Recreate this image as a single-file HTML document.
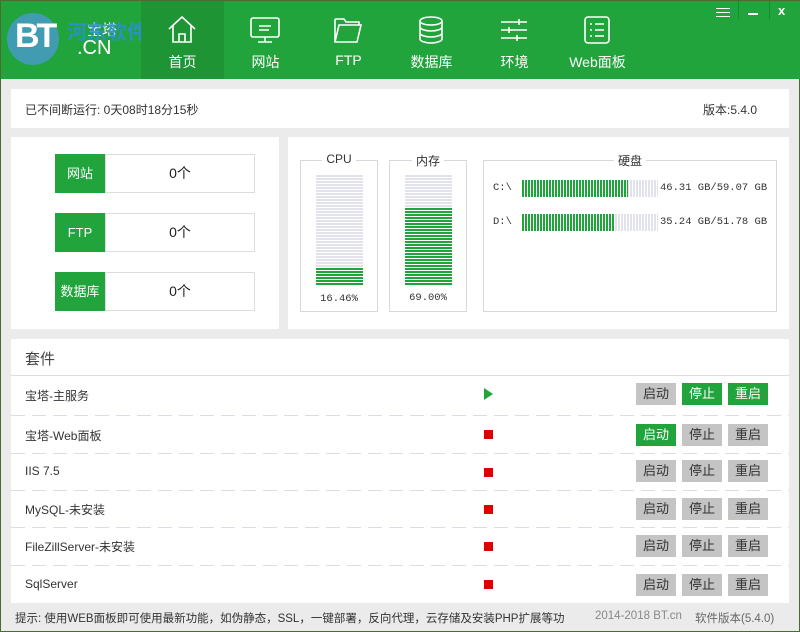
<!DOCTYPE html>
<html><head><meta charset="utf-8"><style>
*{margin:0;padding:0;box-sizing:border-box}
body{width:800px;height:632px;position:relative;background:#ebebeb;font-family:"Liberation Sans","Noto Sans CJK SC",sans-serif;font-size:12px;color:#333;overflow:hidden;border:1px solid #4b6b32}
.abs{position:absolute}
.hdr{left:0;top:0;width:800px;height:78px;background:#22a43d}
.nav{top:0;height:78px;width:83px;color:#fff;text-align:center}
.nav .lb{position:absolute;top:51px;left:0;width:100%;font-size:14px}
.nav svg{position:absolute;top:14px;left:26px}
.panel{background:#fff}
.lbl{background:#22a43d;color:#fff;width:50px;height:39px;line-height:39px;text-align:center;font-size:13px}
.val{border:1px solid #ddd;width:150px;height:39px;line-height:37px;text-align:center;font-size:14px;color:#222}
.vb{width:47px;height:111px;background:repeating-linear-gradient(#e2e2ec 0 2px,#fff 2px 3px)}
.gb{position:absolute;left:0;bottom:0;width:100%;background:repeating-linear-gradient(#22a43d 0 2px,#fff 2px 3px)}
.hb{height:17px;width:136px;background:repeating-linear-gradient(90deg,#e2e2ec 0 2px,#fff 2px 3px)}
.hg{position:absolute;left:0;top:0;height:100%;background:repeating-linear-gradient(90deg,#22a43d 0 2px,#fff 2px 3px)}
.box{border:1px solid #d8d8d8}
.cap{position:absolute;top:-9px;left:0;width:100%;text-align:center;font-size:12px}
.cap span{background:#fff;padding:0 4px}
.mono{font-family:"Liberation Mono","Noto Sans CJK SC",monospace;font-size:10.5px}
.row{left:10px;width:778px;height:1px;background:repeating-linear-gradient(90deg,#dcdce6 0 14px,transparent 14px 21px)}
.rn{left:24px;font-size:12px;color:#333}
.btn{width:40px;height:22px;line-height:22px;text-align:center;font-size:13px;background:#c4c4c4;color:#333}
.btn.g{background:#22a43d;color:#fff}
.ind{width:9px;height:9px;background:#e00000}
</style></head><body>
<div class="abs hdr"></div>
<div class="abs" style="left:6px;top:12px;width:52px;height:52px;border-radius:50%;background:#4a9ad0;opacity:.8"></div>
<div class="abs" style="left:14px;top:16px;color:#fff;font-size:34px;font-weight:bold;letter-spacing:-3px">BT</div>
<div class="abs" style="left:86px;top:18px;color:#fff;font-size:15px">宝塔</div>
<div class="abs" style="left:76px;top:36px;color:#fff;font-size:20px">.CN</div>
<div class="abs" style="left:66px;top:15px;color:#2b8fd6;font-size:20px;font-weight:bold;opacity:.85">河东软件园</div>
<div class="abs nav" style="left:140px;background:#1f9434"><svg width="30" height="30" viewBox="0 0 30 30" fill="none" stroke="#fff" stroke-width="1.6"><path d="M2 14 L15 2 L28 14 M6 11 V27 H24 V11 M12 27 V19 H18 V27"/></svg><div class="lb">首页</div></div>
<div class="abs nav" style="left:223px"><svg width="30" height="30" viewBox="0 0 30 30" fill="none" stroke="#fff" stroke-width="1.6"><rect x="1" y="3" width="28" height="19" rx="2"/><path d="M9 11H21M9 15H19M15 22V27M8 27H22"/></svg><div class="lb">网站</div></div>
<div class="abs nav" style="left:306px"><svg width="30" height="30" viewBox="0 0 30 30" fill="none" stroke="#fff" stroke-width="1.6"><path d="M2 4H11L13 7H26V10M2 4V27H24L28 10H6L2 27"/></svg><div class="lb">FTP</div></div>
<div class="abs nav" style="left:389px"><svg width="30" height="30" viewBox="0 0 30 30" fill="none" stroke="#fff" stroke-width="1.6"><ellipse cx="15" cy="6" rx="11" ry="4"/><path d="M4 6V24C4 26 9 28 15 28S26 26 26 24V6M4 12C4 14 9 16 15 16S26 14 26 12M4 18C4 20 9 22 15 22S26 20 26 18"/></svg><div class="lb">数据库</div></div>
<div class="abs nav" style="left:472px"><svg width="30" height="30" viewBox="0 0 30 30" fill="none" stroke="#fff" stroke-width="1.6"><path d="M2 7H28M2 15H28M2 23H28M20 4V10M10 12V18M18 20V26"/></svg><div class="lb">环境</div></div>
<div class="abs nav" style="left:555px"><svg width="30" height="30" viewBox="0 0 30 30" fill="none" stroke="#fff" stroke-width="1.6"><rect x="3" y="2" width="24" height="26" rx="3"/><path d="M8 9H10M13 9H22M8 15H10M13 15H22M8 21H10M13 21H22"/></svg><div class="lb">Web面板</div></div>
<div class="abs" style="left:715px;top:7px;width:14px;height:1px;background:#fff;box-shadow:0 4px 0 #fff,0 8px 0 #fff"></div>
<div class="abs" style="left:737px;top:0;width:1px;height:18px;background:#1a8a31"></div>
<div class="abs" style="left:768px;top:0;width:1px;height:18px;background:#1a8a31"></div>
<div class="abs" style="left:747px;top:12px;width:10px;height:2px;background:#fff"></div>
<div class="abs" style="left:777px;top:2px;color:#fff;font-size:13px;font-weight:bold">x</div>

<div class="abs panel" style="left:10px;top:88px;width:778px;height:39px"></div>
<div class="abs" style="left:24px;top:100px">已不间断运行: 0天08时18分15秒</div>
<div class="abs" style="left:702px;top:100px">版本:5.4.0</div>

<div class="abs panel" style="left:10px;top:136px;width:268px;height:192px"></div>
<div class="abs lbl" style="left:54px;top:153px">网站</div><div class="abs val" style="left:104px;top:153px">0个</div>
<div class="abs lbl" style="left:54px;top:212px">FTP</div><div class="abs val" style="left:104px;top:212px">0个</div>
<div class="abs lbl" style="left:54px;top:271px">数据库</div><div class="abs val" style="left:104px;top:271px">0个</div>

<div class="abs panel" style="left:287px;top:136px;width:501px;height:192px"></div>
<div class="abs box" style="left:299px;top:159px;width:78px;height:152px"><div class="cap"><span>CPU</span></div></div>
<div class="abs vb" style="left:315px;top:174px"><div class="gb" style="height:18px"></div></div>
<div class="abs mono" style="left:299px;top:292px;width:78px;text-align:center">16.46%</div>
<div class="abs box" style="left:388px;top:159px;width:78px;height:152px"><div class="cap"><span>内存</span></div></div>
<div class="abs vb" style="left:404px;top:174px"><div class="gb" style="height:78px"></div></div>
<div class="abs mono" style="left:388px;top:291px;width:78px;text-align:center">69.00%</div>
<div class="abs box" style="left:482px;top:159px;width:294px;height:152px"><div class="cap"><span>硬盘</span></div></div>
<div class="abs mono" style="left:492px;top:181px">C:\</div>
<div class="abs hb" style="left:521px;top:179px"><div class="hg" style="width:106px"></div></div>
<div class="abs mono" style="left:659px;top:181px">46.31 GB/59.07 GB</div>
<div class="abs mono" style="left:492px;top:215px">D:\</div>
<div class="abs hb" style="left:521px;top:213px"><div class="hg" style="width:93px"></div></div>
<div class="abs mono" style="left:659px;top:215px">35.24 GB/51.78 GB</div>

<div class="abs panel" style="left:10px;top:338px;width:778px;height:264px"></div>
<div class="abs" style="left:24px;top:347px;font-size:15px;color:#444">套件</div>
<div class="abs" style="left:10px;top:374px;width:778px;height:1px;background:#ddd"></div>

<div class="abs rn" style="top:386px">宝塔-主服务</div>
<div class="abs" style="left:483px;top:387px;width:0;height:0;border-left:9px solid #22a43d;border-top:6px solid transparent;border-bottom:6px solid transparent"></div>
<div class="abs btn" style="left:635px;top:382px">启动</div><div class="abs btn g" style="left:681px;top:382px">停止</div><div class="abs btn g" style="left:727px;top:382px">重启</div>
<div class="abs row" style="top:414px"></div>

<div class="abs rn" style="top:426px">宝塔-Web面板</div>
<div class="abs ind" style="left:483px;top:429px"></div>
<div class="abs btn g" style="left:635px;top:423px">启动</div><div class="abs btn" style="left:681px;top:423px">停止</div><div class="abs btn" style="left:727px;top:423px">重启</div>
<div class="abs row" style="top:452px"></div>

<div class="abs rn" style="top:463px">IIS 7.5</div>
<div class="abs ind" style="left:483px;top:467px"></div>
<div class="abs btn" style="left:635px;top:459px">启动</div><div class="abs btn" style="left:681px;top:459px">停止</div><div class="abs btn" style="left:727px;top:459px">重启</div>
<div class="abs row" style="top:489px"></div>

<div class="abs rn" style="top:500px">MySQL-未安装</div>
<div class="abs ind" style="left:483px;top:504px"></div>
<div class="abs btn" style="left:635px;top:497px">启动</div><div class="abs btn" style="left:681px;top:497px">停止</div><div class="abs btn" style="left:727px;top:497px">重启</div>
<div class="abs row" style="top:526px"></div>

<div class="abs rn" style="top:537px">FileZillServer-未安装</div>
<div class="abs ind" style="left:483px;top:541px"></div>
<div class="abs btn" style="left:635px;top:534px">启动</div><div class="abs btn" style="left:681px;top:534px">停止</div><div class="abs btn" style="left:727px;top:534px">重启</div>
<div class="abs row" style="top:564px"></div>

<div class="abs rn" style="top:576px">SqlServer</div>
<div class="abs ind" style="left:483px;top:579px"></div>
<div class="abs btn" style="left:635px;top:573px">启动</div><div class="abs btn" style="left:681px;top:573px">停止</div><div class="abs btn" style="left:727px;top:573px">重启</div>

<div class="abs" style="left:14px;top:609px;font-size:11.5px;color:#333;white-space:nowrap">提示: 使用WEB面板即可使用最新功能，如伪静态，SSL，一键部署，反向代理，云存储及安装PHP扩展等功</div>
<div class="abs" style="left:594px;top:609px;font-size:11.5px;color:#888">2014-2018 BT.cn</div>
<div class="abs" style="left:694px;top:609px;font-size:11.5px;color:#666">软件版本(5.4.0)</div>
</body></html>
